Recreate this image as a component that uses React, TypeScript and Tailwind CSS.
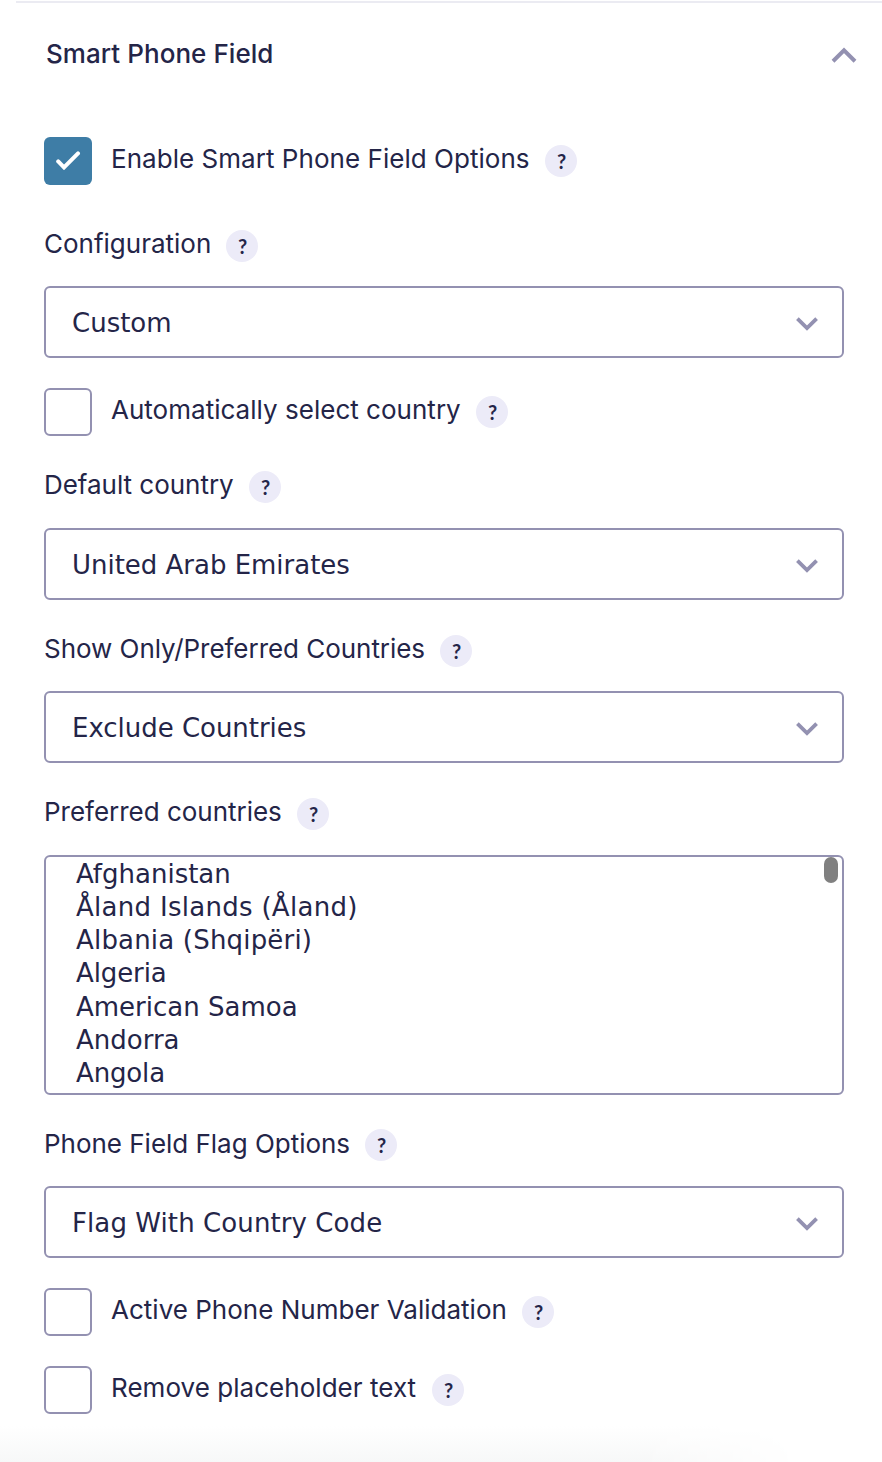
import type { ReactNode } from "react";

function Help() {
  return (
    <span className="flex size-8 shrink-0 items-center justify-center rounded-full bg-[#ecebf8] pl-px font-['Lato',sans-serif] text-[20px] font-bold leading-none">
      ?
    </span>
  );
}

function Chevron({ up = false }: { up?: boolean }) {
  return up ? (
    <svg width="26" height="18" viewBox="0 0 26 18" fill="none" stroke="#9391b1" strokeWidth="4">
      <path d="M2 15.2 13 4.4l11 10.8" />
    </svg>
  ) : (
    <svg width="22" height="14" viewBox="0 0 22 14" fill="none" stroke="#9391b1" strokeWidth="3.8">
      <path d="M1.4 1.6 11 11l9.6-9.4" />
    </svg>
  );
}

function Label({ text, width, className }: { text: string; width: string; className: string }) {
  return (
    <div className={`flex h-8 items-center ${className}`}>
      <span className={`shrink-0 whitespace-nowrap ${width}`}>{text}</span>
      <Help />
    </div>
  );
}

function Select({ value, tracking, className }: { value: string; tracking: string; className: string }) {
  return (
    <div className={`flex h-[72px] items-center justify-between rounded-[6px] border-2 border-[#9391b1] pl-[26px] pr-6 pt-0.5 font-['DejaVu_Sans',sans-serif] ${tracking} ${className}`}>
      <span className="whitespace-nowrap">{value}</span>
      <div className="pt-0.5"><Chevron /></div>
    </div>
  );
}

function Check({ checked = false, className, children }: { checked?: boolean; className: string; children: ReactNode }) {
  return (
    <div className={`flex h-12 items-center ${className}`}>
      <span className={`mr-[19px] flex size-12 shrink-0 items-center justify-center rounded-[6px] ${checked ? "bg-[#3e7da6]" : "border-2 border-[#9391b1]"}`}>
        {checked && (
          <svg className="mb-0.5" width="26" height="20" viewBox="0 0 26 20" fill="none" stroke="white" strokeWidth="4" strokeLinecap="round">
            <path d="m3.2 11.4 5.8 6L23 3.4" />
          </svg>
        )}
      </span>
      {children}
    </div>
  );
}

const countries = [
  { name: "Afghanistan", tracking: "tracking-normal" },
  { name: "Åland Islands (Åland)", tracking: "tracking-[0.29px]" },
  { name: "Albania (Shqipëri)", tracking: "tracking-[0.19px]" },
  { name: "Algeria", tracking: "tracking-[-0.1px]" },
  { name: "American Samoa", tracking: "tracking-normal" },
  { name: "Andorra", tracking: "tracking-normal" },
  { name: "Angola", tracking: "tracking-[-0.15px]" },
];

export default function App() {
  return (
    <div className="flex h-[1462px] w-[882px] flex-col overflow-hidden bg-white font-['Inter',sans-serif] text-[26px] leading-8 text-[#242548]">
      <div className="ml-4 mt-px h-0.5 shrink-0 bg-[#ebebf2]" />
      <header className="flex h-[134px] shrink-0 items-start justify-between pl-[46px] pr-[25px] pt-[35px]">
        <h2 className="font-medium tracking-[0.05px]">Smart Phone Field</h2>
        <div className="pt-2"><Chevron up /></div>
      </header>
      <main className="flex w-[844px] flex-col pl-11">
        <Check checked className="">
          <Label text="Enable Smart Phone Field Options" width="w-[434px] pb-1 tracking-[0.04px]" className="" />
        </Check>
        <Label text="Configuration" width="w-[182px] pb-1" className="mt-[45px]" />
        <Select value="Custom" tracking="tracking-normal" className="mt-6" />
        <Check className="mt-[30px]">
          <Label text="Automatically select country" width="w-[365px] pb-1 tracking-[0.02px]" className="" />
        </Check>
        <Label text="Default country" width="w-[205px] pb-1 tracking-[-0.03px]" className="mt-[35px]" />
        <Select value="United Arab Emirates" tracking="tracking-[-0.02px]" className="mt-[25px]" />
        <Label text="Show Only/Preferred Countries" width="w-[396px] pb-1 tracking-[-0.04px]" className="mt-[35px]" />
        <Select value="Exclude Countries" tracking="tracking-[-0.03px]" className="mt-6" />
        <Label text="Preferred countries" width="w-[253px] pb-1 tracking-[-0.02px]" className="mt-[35px]" />
        <div className="mt-[25px] flex h-60 justify-between overflow-hidden rounded-[6px] border-2 border-[#9391b1] pl-[30px] pr-1 font-['DejaVu_Sans',sans-serif] leading-[33.12px]">
          <ul className="pt-px">
            {countries.map(({ name, tracking }) => <li key={name} className={tracking}>{name}</li>)}
          </ul>
          <span className="h-[26px] w-3.5 rounded-full bg-[#808080]" />
        </div>
        <Label text="Phone Field Flag Options" width="w-[321px] pb-[3px] tracking-[-0.02px]" className="mt-[34px]" />
        <Select value="Flag With Country Code" tracking="tracking-[0.09px]" className="mt-[25px]" />
        <Check className="mt-[30px]">
          <Label text="Active Phone Number Validation" width="w-[411px] pb-1 tracking-[0.01px]" className="" />
        </Check>
        <Check className="mt-[30px]">
          <Label text="Remove placeholder text" width="w-[321px] pb-1 tracking-[0.04px]" className="" />
        </Check>
      </main>
      <div className="mt-auto h-9 w-[800px] bg-linear-to-b from-white to-[#f7f8f8] mask-r-from-80%" />
    </div>
  );
}
